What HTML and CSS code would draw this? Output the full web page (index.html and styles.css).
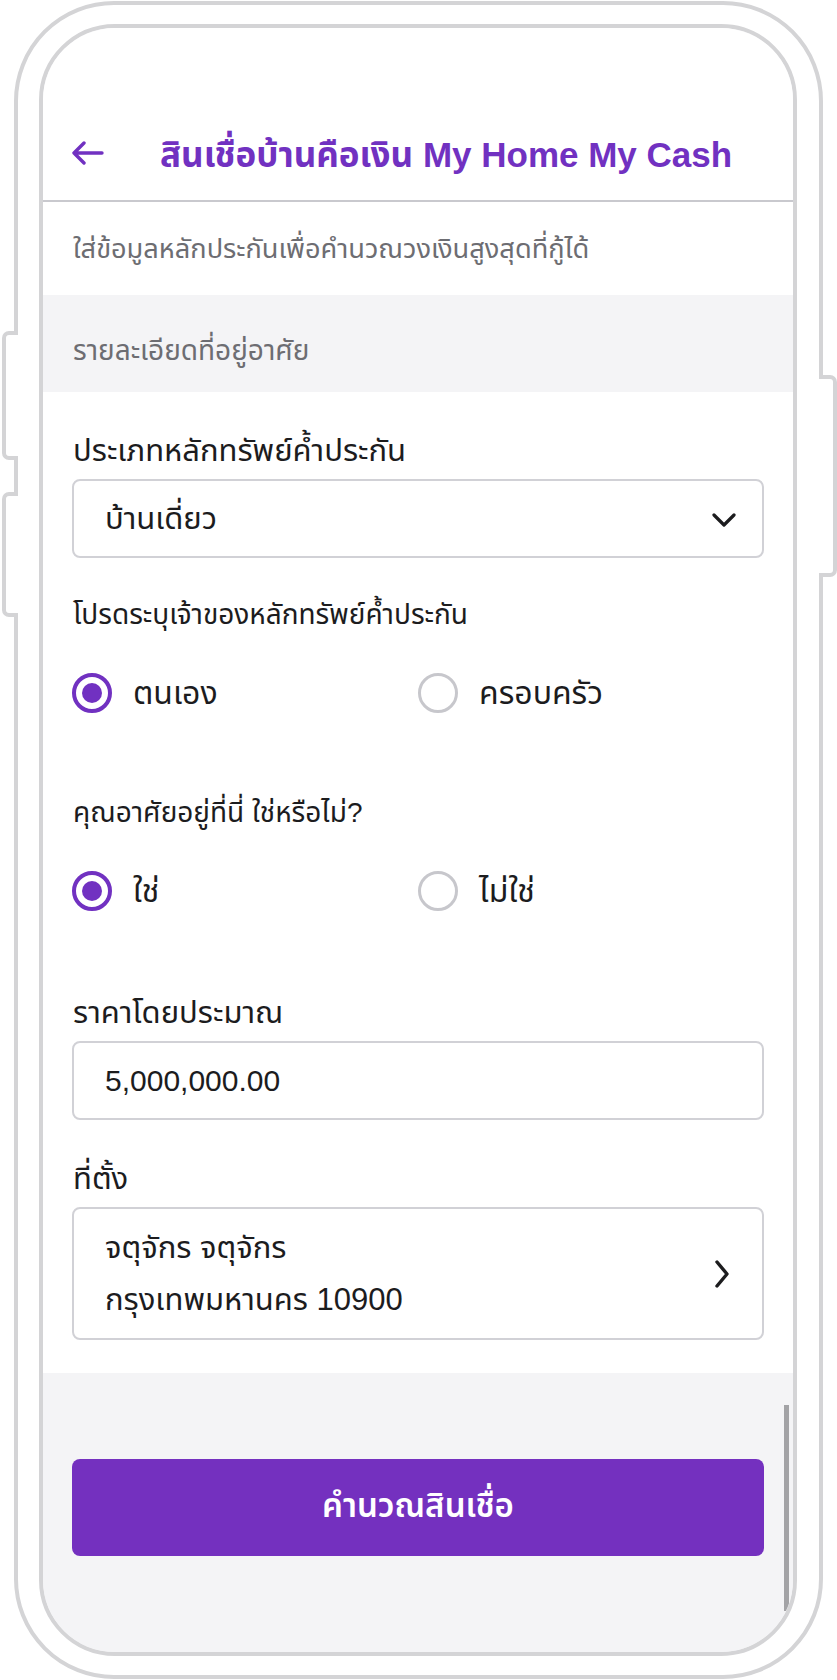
FILE: index.html
```html
<!DOCTYPE html>
<html lang="th">
<head>
<meta charset="utf-8">
<title>สินเชื่อบ้านคือเงิน My Home My Cash</title>
<link rel="stylesheet" href="styles.css">
</head>
<body>
<div class="device">
  <span class="side-btn side-btn--l1"></span>
  <span class="side-btn side-btn--l2"></span>
  <span class="side-btn side-btn--r"></span>
  <div class="screen">
    <header class="topbar">
      <svg class="back" width="32" height="24" viewBox="0 0 32 24" fill="none" stroke="currentColor" stroke-width="3.4" stroke-linecap="round" stroke-linejoin="round"><path d="M2 12H30M12 2L2 12L12 22"/></svg>
      <h1 class="title">สินเชื่อบ้านคือเงิน My Home My Cash</h1>
    </header>
    <p class="intro">ใส่ข้อมูลหลักประกันเพื่อคำนวณวงเงินสูงสุดที่กู้ได้</p>
    <div class="section-head">รายละเอียดที่อยู่อาศัย</div>
    <div class="form">
      <div class="label label--lg">ประเภทหลักทรัพย์ค้ำประกัน</div>
      <div class="field field--select">
        <span class="field-text">บ้านเดี่ยว</span>
        <svg class="chev-down" width="24" height="14" viewBox="0 0 24 14" fill="none" stroke="currentColor" stroke-width="3.2" stroke-linecap="round" stroke-linejoin="round"><path d="M2 2L12 12L22 2"/></svg>
      </div>

      <div class="label label--sm">โปรดระบุเจ้าของหลักทรัพย์ค้ำประกัน</div>
      <div class="radios">
        <div class="radio radio--on"><span class="dot"></span><span class="radio-text">ตนเอง</span></div>
        <div class="radio"><span class="dot"></span><span class="radio-text">ครอบครัว</span></div>
      </div>

      <div class="label label--sm label--gap">คุณอาศัยอยู่ที่นี่ ใช่หรือไม่?</div>
      <div class="radios">
        <div class="radio radio--on"><span class="dot"></span><span class="radio-text">ใช่</span></div>
        <div class="radio"><span class="dot"></span><span class="radio-text">ไม่ใช่</span></div>
      </div>

      <div class="label label--lg label--gap2">ราคาโดยประมาณ</div>
      <div class="field">
        <span class="field-text field-text--num">5,000,000.00</span>
      </div>

      <div class="label label--lg label--after-field">ที่ตั้ง</div>
      <div class="field field--address">
        <div class="address">
          <span class="field-text">จตุจักร จตุจักร</span>
          <span class="field-text">กรุงเทพมหานคร 10900</span>
        </div>
        <svg class="chev-right" width="16" height="28" viewBox="0 0 16 28" fill="none" stroke="currentColor" stroke-width="3.4" stroke-linecap="round" stroke-linejoin="round"><path d="M3 2L13 14L3 26"/></svg>
      </div>
    </div>
    <div class="actions">
      <button class="primary" type="button">คำนวณสินเชื่อ</button>
    </div>
    <span class="scrollbar"></span>
  </div>
</div>
</body>
</html>
```
FILE: styles.css
```css
* { box-sizing: border-box; }

html, body {
  margin: 0;
  padding: 0;
  background: #ffffff;
}

body {
  font-family: "Liberation Sans", "Noto Sans Thai", "Noto Sans", sans-serif;
  color: #1c1c1e;
}

.device {
  position: relative;
  margin: 1px 0 0 14px;
  width: 809px;
  height: 1678px;
  border: 4px solid #d4d4d6;
  border-radius: 100px;
  padding: 19px 22px 19px 21px;
  background: #ffffff;
}

.side-btn {
  position: absolute;
  width: 16px;
  border: 4px solid #d4d4d6;
  background: #ffffff;
}

.side-btn--l1,
.side-btn--l2 {
  left: -16px;
  border-right: none;
  border-radius: 7px 0 0 7px;
}

.side-btn--l1 { top: 326px; height: 129px; }
.side-btn--l2 { top: 487px; height: 125px; }

.side-btn--r {
  right: -18px;
  width: 18px;
  top: 370px;
  height: 202px;
  border-left: none;
  border-radius: 0 7px 7px 0;
}

.screen {
  position: relative;
  height: 1632px;
  border: 4px solid #d4d4d6;
  border-radius: 76px;
  overflow: hidden;
  background: #f4f4f6;
  display: flex;
  flex-direction: column;
}

.topbar {
  background: #ffffff;
  height: 174px;
  padding: 100px 0 0 29px;
  display: flex;
  align-items: flex-start;
  border-bottom: 2px solid #c9c9ce;
  color: #7131c1;
}

.back {
  flex: none;
  margin-top: 13px;
}

.title {
  margin: 2px 0 0 56px;
  font-size: 35px;
  line-height: 50px;
  font-weight: 700;
  color: #7131c1;
  white-space: nowrap;
}

.intro {
  margin: 0;
  background: #ffffff;
  height: 93px;
  padding: 30px 0 0 30px;
  font-size: 27.2px;
  line-height: 34px;
  color: #6d6d72;
}

.section-head {
  height: 97px;
  padding: 39px 0 0 30px;
  font-size: 28px;
  line-height: 34px;
  color: #6d6d72;
  background: #f4f4f6;
}

.form {
  background: #ffffff;
  padding: 41px 29px 33px 29px;
  display: flex;
  flex-direction: column;
}

.label {
  line-height: 36px;
  color: #1c1c1e;
  padding-left: 1px;
}

.label--lg {
  font-size: 31px;
  margin-bottom: 10px;
}

.label--sm {
  font-size: 28px;
  margin-top: 39px;
  margin-bottom: 40px;
}

.label--gap { margin-top: 82px; }
.label--gap2 { margin-top: 84px; }
.label--after-field { margin-top: 41px; }

.field {
  height: 79px;
  border: 2px solid #d1d1d6;
  border-radius: 8px;
  padding: 0 26px 0 31px;
  display: flex;
  align-items: center;
  justify-content: space-between;
  color: #1c1c1e;
}

.field-text {
  font-size: 31px;
  line-height: 52px;
}

.field-text--num { font-size: 30px; }

.chev-down { flex: none; margin-top: 2px; }

.field--address {
  height: 133px;
  padding-top: 13px;
  padding-bottom: 12px;
  padding-right: 32px;
}

.address {
  display: flex;
  flex-direction: column;
}

.chev-right { flex: none; }

.radios {
  display: grid;
  grid-template-columns: 1fr 1fr;
  height: 40px;
}

.radio {
  display: flex;
  align-items: center;
  gap: 21px;
}

.dot {
  flex: none;
  width: 40px;
  height: 40px;
  border-radius: 50%;
  border: 3px solid #c7c7cc;
  position: relative;
}

.radio--on .dot {
  border: 4px solid #7131c1;
}

.radio--on .dot::after {
  content: "";
  position: absolute;
  left: 6px;
  top: 6px;
  width: 20px;
  height: 20px;
  border-radius: 50%;
  background: #7131c1;
}

.radio-text {
  font-size: 32px;
  line-height: 40px;
  color: #1c1c1e;
}

.actions {
  flex: 1;
  background: #f4f4f6;
  padding: 86px 29px 0 29px;
}

.primary {
  display: block;
  width: 100%;
  height: 97px;
  border: none;
  border-radius: 8px;
  background: #7430bf;
  color: #ffffff;
  font-family: inherit;
  font-size: 33px;
  font-weight: 600;
  line-height: 40px;
  padding: 0 0 4px 0;
}

.scrollbar {
  position: absolute;
  right: 4px;
  top: 1377px;
  width: 5px;
  height: 206px;
  background: #a3a3a6;
}
```
